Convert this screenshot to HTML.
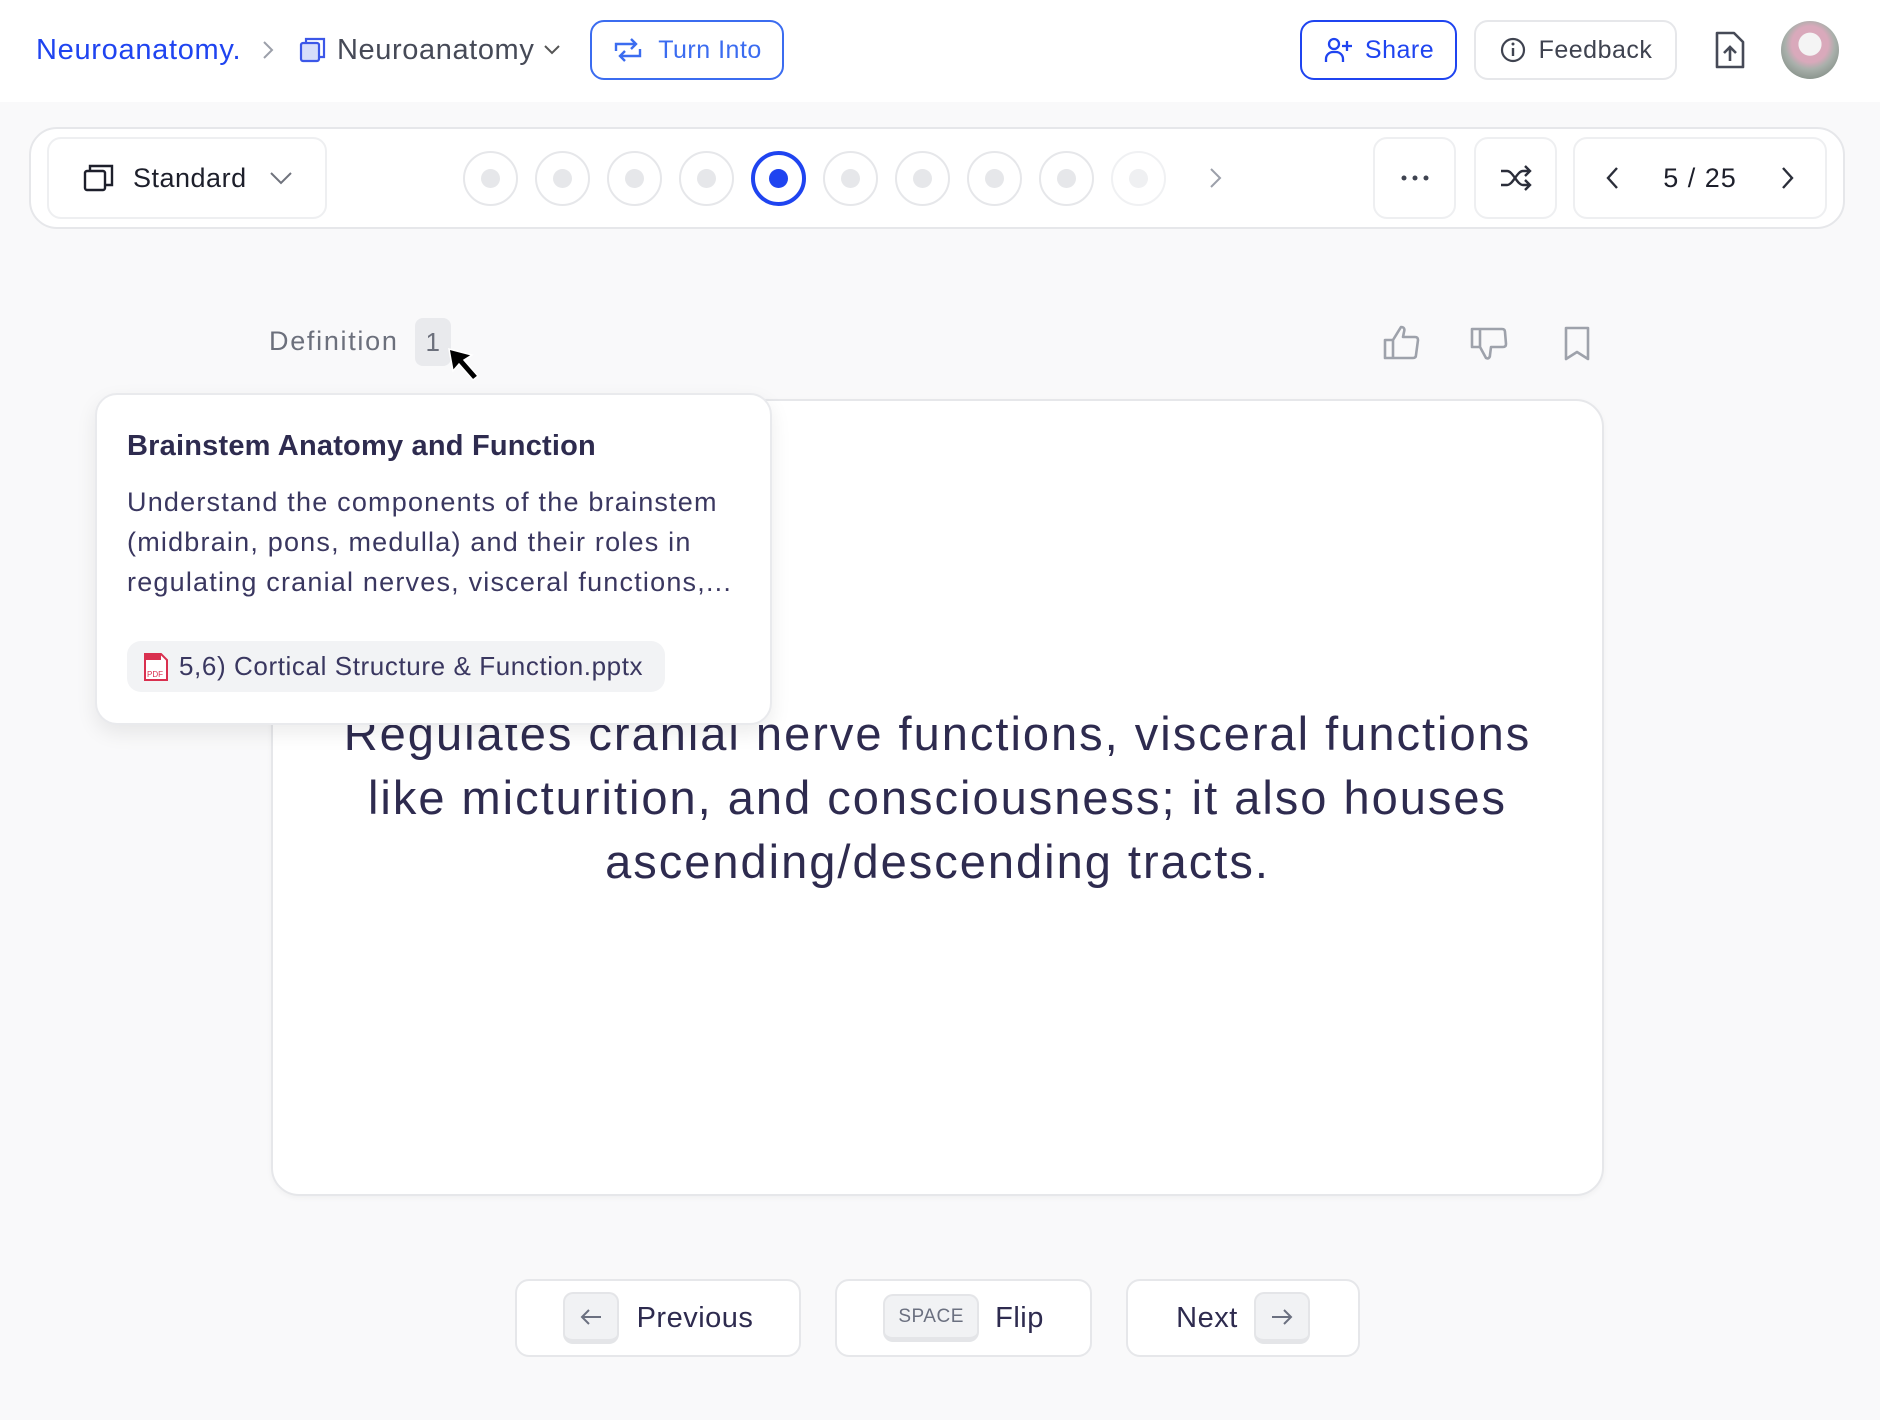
<!DOCTYPE html>
<html><head><meta charset="utf-8"><style>
*{box-sizing:border-box;margin:0;padding:0}
body{width:1880px;height:1420px;background:#f9f9fa;font-family:"Liberation Sans",sans-serif;position:relative;overflow:hidden;color:#2e2b4f;letter-spacing:0.5px}
.abs{position:absolute}
.hdr{left:0;top:0;width:1880px;height:102px;background:#fff}
.btn{position:absolute;display:flex;align-items:center;justify-content:center;border-radius:14px;background:#fff}
.dot{position:absolute;width:55px;height:55px;border-radius:50%;border:2px solid #e6e7ea;display:flex;align-items:center;justify-content:center}
.dot i{width:19px;height:19px;border-radius:50%;background:#e6e7ea}
.key{background:#f1f2f4;border:2px solid #e4e5e8;border-bottom-width:5px;border-radius:10px;display:flex;align-items:center;justify-content:center;color:#6b7080}
</style></head><body>
<div class="abs hdr"></div>
<div class="abs" style="left:36px;top:34px;font-size:29px;color:#1f44f0;letter-spacing:0.7px">Neuroanatomy.</div>
<svg class="abs" style="left:260px;top:38px" width="16" height="24" viewBox="0 0 16 24"><path d="M4 4l8 8-8 8" fill="none" stroke="#9ca0aa" stroke-width="2"/></svg>
<svg class="abs" style="left:299px;top:37px" width="28" height="26" viewBox="0 0 28 26"><rect x="2" y="6" width="18" height="18" rx="2" fill="#d7defa" stroke="#3c57e8" stroke-width="2.2"/><path d="M7 6V2h18v18h-5" fill="none" stroke="#3c57e8" stroke-width="2.2"/></svg>
<div class="abs" style="left:337px;top:34px;font-size:29px;color:#464a57;letter-spacing:0.6px">Neuroanatomy</div>
<svg class="abs" style="left:543px;top:44px" width="18" height="12" viewBox="0 0 18 12"><path d="M2 2l7 7 7-7" fill="none" stroke="#555" stroke-width="2"/></svg>
<div class="btn" style="left:590px;top:20px;width:194px;height:60px;border:2px solid #3b6cf0;color:#3b6cf0;font-size:25px"><svg width="32" height="26" viewBox="0 0 32 26" style="margin-right:14px"><path d="M4 14V7h20M19 2l5 5-5 5M28 12v7H8M13 24l-5-5 5-5" fill="none" stroke="#3b6cf0" stroke-width="2.4"/></svg>Turn Into</div>
<div class="btn" style="left:1300px;top:20px;width:157px;height:60px;border:2px solid #1f44f0;color:#1f44f0;font-size:25px"><svg width="30" height="30" viewBox="0 0 30 30" style="margin-right:12px"><circle cx="11" cy="9" r="5" fill="none" stroke="#1f44f0" stroke-width="2.3"/><path d="M3 27v-3a7 7 0 0 1 7-7h3a7 7 0 0 1 7 7v3M24 6v10M19 11h10" fill="none" stroke="#1f44f0" stroke-width="2.3"/></svg>Share</div>
<div class="btn" style="left:1474px;top:20px;width:203px;height:60px;border:2px solid #e6e7ea;color:#3f4350;font-size:25px"><svg width="28" height="28" viewBox="0 0 28 28" style="margin-right:12px"><circle cx="14" cy="14" r="11" fill="none" stroke="#3f4350" stroke-width="2.2"/><path d="M14 12v8" stroke="#3f4350" stroke-width="2.4"/><circle cx="14" cy="8" r="1.5" fill="#3f4350"/></svg>Feedback</div>
<svg class="abs" style="left:1714px;top:30px" width="32" height="40" viewBox="0 0 32 40"><path d="M3 3h17l9 9v25H3z" fill="none" stroke="#464a57" stroke-width="2.6" stroke-linejoin="round"/><path d="M16 31V18M10 23l6-6 6 6" fill="none" stroke="#464a57" stroke-width="2.6"/></svg>
<div class="abs" style="left:1781px;top:21px;width:58px;height:58px;border-radius:50%;background:radial-gradient(circle at 50% 40%,#f4f4f4 0 25%,#d9a9bb 26% 40%,#a9b0ab 55%,#6d7a70)"></div>

<div class="abs" style="left:29px;top:127px;width:1816px;height:102px;border:2px solid #e6e7ea;border-radius:28px;background:#fff"></div>
<div class="btn" style="left:47px;top:137px;width:280px;height:82px;border:2px solid #eeeff1;font-size:27px;color:#1d1f2b;justify-content:flex-start;padding-left:34px"><svg width="32" height="30" viewBox="0 0 32 30" style="margin-right:18px"><rect x="2" y="8" width="20" height="19" rx="2" fill="none" stroke="#1d1f2b" stroke-width="2.4"/><path d="M7 8V3h22v19h-7" fill="none" stroke="#1d1f2b" stroke-width="2.4"/></svg>Standard<svg width="24" height="14" viewBox="0 0 24 14" style="margin-left:22px"><path d="M2 2l10 10 10-10" fill="none" stroke="#70737d" stroke-width="2"/></svg></div>
<div class="dot" style="left:463px;top:151px"><i></i></div>
<div class="dot" style="left:535px;top:151px"><i></i></div>
<div class="dot" style="left:607px;top:151px"><i></i></div>
<div class="dot" style="left:679px;top:151px"><i></i></div>
<div class="dot" style="left:751px;top:151px;border:4px solid #1f44f0"><i style="background:#1f44f0"></i></div>
<div class="dot" style="left:823px;top:151px"><i></i></div>
<div class="dot" style="left:895px;top:151px"><i></i></div>
<div class="dot" style="left:967px;top:151px"><i></i></div>
<div class="dot" style="left:1039px;top:151px"><i></i></div>
<div class="dot" style="left:1111px;top:151px;border-color:#f0f1f3"><i style="background:#eff0f2"></i></div>
<svg class="abs" style="left:1207px;top:166px" width="16" height="24" viewBox="0 0 16 24"><path d="M4 3l9 9-9 9" fill="none" stroke="#9ca0aa" stroke-width="2"/></svg>
<div class="btn" style="left:1373px;top:137px;width:83px;height:82px;border:2px solid #eeeff1"><svg width="30" height="8"><circle cx="4" cy="4" r="2.5" fill="#3f4350"/><circle cx="15" cy="4" r="2.5" fill="#3f4350"/><circle cx="26" cy="4" r="2.5" fill="#3f4350"/></svg></div>
<div class="btn" style="left:1474px;top:137px;width:83px;height:82px;border:2px solid #eeeff1"><svg width="34" height="30" viewBox="0 0 34 30"><path d="M2 8h6c6 0 10 14 16 14h6M2 22h6c6 0 10-14 16-14h6M26 3l5 5-5 5M26 17l5 5-5 5" fill="none" stroke="#2b2e3a" stroke-width="2.4"/></svg></div>
<div class="btn" style="left:1573px;top:137px;width:254px;height:82px;border:2px solid #eeeff1;justify-content:space-between;padding:0 30px;font-size:27px;color:#1d1f2b;letter-spacing:1px"><svg width="16" height="26" viewBox="0 0 16 26"><path d="M12 3L3 13l9 10" fill="none" stroke="#2b2e3a" stroke-width="2.4"/></svg>5 / 25<svg width="16" height="26" viewBox="0 0 16 26"><path d="M4 3l9 10-9 10" fill="none" stroke="#2b2e3a" stroke-width="2.4"/></svg></div>

<div class="abs" style="left:269px;top:326px;font-size:27px;color:#6c707c;letter-spacing:1.7px">Definition</div>
<div class="abs" style="left:415px;top:318px;width:36px;height:48px;border-radius:8px;background:#e9eaed;font-size:26px;color:#6c707c;display:flex;align-items:center;justify-content:center">1</div>
<svg class="abs" style="left:446px;top:346px" width="45" height="45" viewBox="0 0 45 45"><path d="M3 3l4 22 6-7 14 16 5-4-14-16 8-5z" fill="#000" stroke="#fff" stroke-width="1.5"/></svg>
<svg class="abs" style="left:1383px;top:324px" width="38" height="36" viewBox="0 0 38 36"><path d="M2 16h8v18H2zM10 16l8-13c3 0 4 2 3 5l-1 5h12c2 0 3 1 3 3l-2 15c0 2-1 3-3 3H10" fill="none" stroke="#9ea2ab" stroke-width="2.6" stroke-linejoin="round"/></svg>
<svg class="abs" style="left:1470px;top:326px" width="38" height="36" viewBox="0 0 38 36"><path d="M2 3h8v18H2zM10 3h22c2 0 3 1 3 3l1 12c0 2-1 3-3 3H21l-1 8c0 3-2 4-4 3l-6-11" fill="none" stroke="#9ea2ab" stroke-width="2.6" stroke-linejoin="round"/></svg>
<svg class="abs" style="left:1563px;top:325px" width="28" height="36" viewBox="0 0 28 36"><path d="M3 3h22v31l-11-7-11 7z" fill="none" stroke="#9ea2ab" stroke-width="2.6" stroke-linejoin="round"/></svg>

<div class="abs" style="left:271px;top:399px;width:1333px;height:797px;border:2px solid #e6e7ea;border-radius:28px;background:#fff;box-shadow:0 2px 6px rgba(0,0,0,.04)"></div>
<div class="abs" style="left:300px;top:702px;width:1275px;text-align:center;font-size:47px;line-height:64px;color:#2e2b4f;letter-spacing:2px">Regulates cranial nerve functions, visceral functions like micturition, and consciousness; it also houses ascending/descending tracts.</div>

<div class="abs" style="left:95px;top:393px;width:677px;height:332px;border:2px solid #e9eaed;border-radius:22px;background:#fff;box-shadow:0 8px 20px rgba(0,0,0,.08)"></div>
<div class="abs" style="left:127px;top:430px;font-size:29px;font-weight:bold;color:#2e2b4f;letter-spacing:0.2px">Brainstem Anatomy and Function</div>
<div class="abs" style="left:127px;top:482px;width:640px;font-size:27px;line-height:40px;color:#3a3760;letter-spacing:1.2px">Understand the components of the brainstem (midbrain, pons, medulla) and their roles in regulating cranial nerves, visceral functions,...</div>
<div class="abs" style="left:127px;top:641px;width:538px;height:51px;border-radius:14px;background:#f2f3f5;display:flex;align-items:center;padding-left:16px;font-size:26px;color:#3a3760;letter-spacing:0.6px;white-space:nowrap"><svg width="26" height="30" viewBox="0 0 26 30" style="margin-right:10px;flex:none"><path d="M2 2h16l6 6v20H2z" fill="#fff" stroke="#d9304f" stroke-width="2"/><rect x="2" y="2" width="16" height="6" fill="#d9304f"/><text x="4" y="25" font-size="8" fill="#d9304f" font-family="Liberation Sans" letter-spacing="0">PDF</text></svg>5,6) Cortical Structure &amp; Function.pptx</div>

<div class="btn" style="left:515px;top:1279px;width:286px;height:78px;border:2px solid #e6e7ea;font-size:29px;font-weight:500"><div class="key" style="width:56px;height:52px;margin-right:18px"><svg width="24" height="18" viewBox="0 0 24 18"><path d="M22 9H3M10 2L3 9l7 7" fill="none" stroke="#6b7080" stroke-width="2"/></svg></div>Previous</div>
<div class="btn" style="left:835px;top:1279px;width:257px;height:78px;border:2px solid #e6e7ea;font-size:29px;font-weight:500"><div class="key" style="width:96px;height:48px;margin-right:16px;font-size:19px;font-weight:400">SPACE</div>Flip</div>
<div class="btn" style="left:1126px;top:1279px;width:234px;height:78px;border:2px solid #e6e7ea;font-size:29px;font-weight:500">Next<div class="key" style="width:56px;height:52px;margin-left:16px"><svg width="24" height="18" viewBox="0 0 24 18"><path d="M2 9h19M14 2l7 7-7 7" fill="none" stroke="#6b7080" stroke-width="2"/></svg></div></div>
</body></html>
